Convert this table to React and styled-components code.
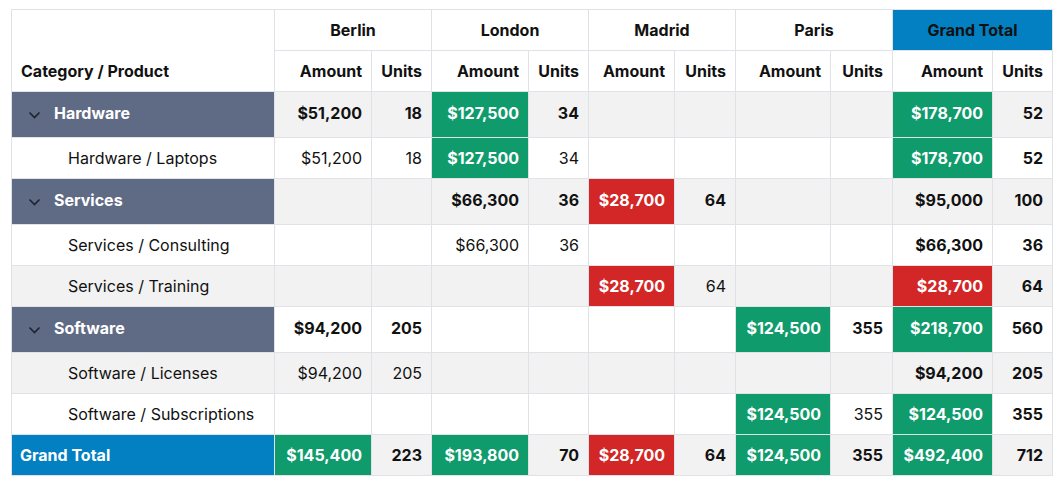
import React from 'react';
import styled, { createGlobalStyle } from 'styled-components';

const GlobalStyle = createGlobalStyle`
  body {
    margin: 0;
    background: #ffffff;
    font-family: Inter, "Noto Sans", sans-serif;
    color: #111111;
  }
`;

const cities = ['Berlin', 'London', 'Madrid', 'Paris'];
const widths = [263, 97, 60, 97, 60, 86, 61, 95, 62, 100, 60];

const rows = [
  { kind: 'group', label: 'Hardware', cells: [[51200, 18], [127500, 34], null, null, [178700, 52]] },
  { kind: 'child', label: 'Hardware / Laptops', cells: [[51200, 18], [127500, 34], null, null, [178700, 52]] },
  { kind: 'group', label: 'Services', cells: [null, [66300, 36], [28700, 64], null, [95000, 100]] },
  { kind: 'child', label: 'Services / Consulting', cells: [null, [66300, 36], null, null, [66300, 36]] },
  { kind: 'child', label: 'Services / Training', cells: [null, null, [28700, 64], null, [28700, 64]] },
  { kind: 'group', label: 'Software', cells: [[94200, 205], null, null, [124500, 355], [218700, 560]] },
  { kind: 'child', label: 'Software / Licenses', cells: [[94200, 205], null, null, null, [94200, 205]] },
  { kind: 'child', label: 'Software / Subscriptions', cells: [null, null, null, [124500, 355], [124500, 355]] },
  { kind: 'total', label: 'Grand Total', cells: [[145400, 223], [193800, 70], [28700, 64], [124500, 355], [492400, 712]] },
];

const money = (n) => '$' + n.toLocaleString('en-US');
const tone = (n) => (n >= 100000 ? 'good' : n < 30000 ? 'bad' : null);

const Page = styled.div`
  padding: 9px 10px 0 11px;
`;

const Table = styled.table`
  border-collapse: collapse;
  table-layout: fixed;
  width: 1041px;
  font-size: 16px;
  border-top: 1px solid #e1e2e8;
  border-left: 1px solid #e1e2e8;
`;

const HeadRow = styled.tr`
  height: 41px;
`;

const Head = styled.th`
  border: 1px solid #e1e2e8;
  border-top: none;
  padding: 0 9px;
  font-weight: 700;
  white-space: nowrap;
  text-align: ${(p) => p.$align || 'center'};
  vertical-align: ${(p) => p.$valign || 'middle'};
  background: ${(p) => (p.$total ? '#0280c2' : '#ffffff')};
  color: #111111;
`;

const CornerHead = styled(Head)`
  padding-bottom: 10px;
`;

const BodyRow = styled.tr`
  height: ${(p) => (p.$kind === 'group' ? '46px' : '41px')};
  background: ${(p) => (p.$striped ? '#f2f2f2' : '#ffffff')};

  & > td {
    padding-bottom: ${(p) => (p.$kind === 'group' ? '3px' : '0')};
  }
`;

const LabelCell = styled.td`
  border: 1px solid #e1e2e8;
  white-space: nowrap;
  padding-top: 0;
  padding-right: 9px;
  padding-left: ${(p) => (p.$kind === 'child' ? '56px' : '8px')};
  font-weight: ${(p) => (p.$kind === 'child' ? 400 : 700)};
  color: ${(p) => (p.$kind === 'child' ? '#111111' : '#ffffff')};
  background: ${(p) =>
    p.$kind === 'group' ? '#5f6b85' : p.$kind === 'total' ? '#0280c2' : 'transparent'};
`;

const GroupLabel = styled.span`
  display: flex;
  align-items: center;
  gap: 13px;
  padding-left: 8px;
`;

const Chevron = styled.svg`
  width: 13px;
  height: 8px;
  flex: none;
  margin-top: 3px;
`;

const ValueCell = styled.td`
  border: 1px solid #e1e2e8;
  padding-top: 0;
  padding-right: 9px;
  padding-left: 4px;
  text-align: right;
  white-space: nowrap;
  font-weight: ${(p) => (p.$bold ? 700 : 400)};
  color: ${(p) => (p.$tone ? '#ffffff' : '#111111')};
  background: ${(p) =>
    p.$tone === 'good' ? '#109b6c' : p.$tone === 'bad' ? '#d32626' : 'transparent'};
`;

function Row({ row, index }) {
  const strong = row.kind !== 'child';
  return (
    <BodyRow $kind={row.kind} $striped={index % 2 === 0}>
      <LabelCell $kind={row.kind}>
        {row.kind === 'group' ? (
          <GroupLabel>
            <Chevron viewBox="0 0 13 8">
              <path d="M1.5 1.5 L6.5 6.5 L11.5 1.5" fill="none" stroke="#1e2230" strokeWidth="1.6" />
            </Chevron>
            {row.label}
          </GroupLabel>
        ) : (
          row.label
        )}
      </LabelCell>
      {row.cells.map((c, i) => {
        const grand = i === 4;
        const t = c ? tone(c[0]) : null;
        return (
          <React.Fragment key={i}>
            <ValueCell $tone={t} $bold={strong || grand || !!t}>
              {c ? money(c[0]) : ''}
            </ValueCell>
            <ValueCell $bold={strong || grand}>{c ? c[1] : ''}</ValueCell>
          </React.Fragment>
        );
      })}
    </BodyRow>
  );
}

export default function App() {
  return (
    <Page>
      <GlobalStyle />
      <Table>
        <colgroup>
          {widths.map((w, i) => (
            <col key={i} style={{ width: w }} />
          ))}
        </colgroup>
        <thead>
          <HeadRow>
            <CornerHead rowSpan={2} $align="left" $valign="bottom">
              Category / Product
            </CornerHead>
            {cities.map((c) => (
              <Head key={c} colSpan={2}>
                {c}
              </Head>
            ))}
            <Head colSpan={2} $total>
              Grand Total
            </Head>
          </HeadRow>
          <HeadRow>
            {[...cities, 'Grand Total'].map((c) => (
              <React.Fragment key={c}>
                <Head $align="right">Amount</Head>
                <Head $align="right">Units</Head>
              </React.Fragment>
            ))}
          </HeadRow>
        </thead>
        <tbody>
          {rows.map((r, i) => (
            <Row key={r.label} row={r} index={i} />
          ))}
        </tbody>
      </Table>
    </Page>
  );
}
